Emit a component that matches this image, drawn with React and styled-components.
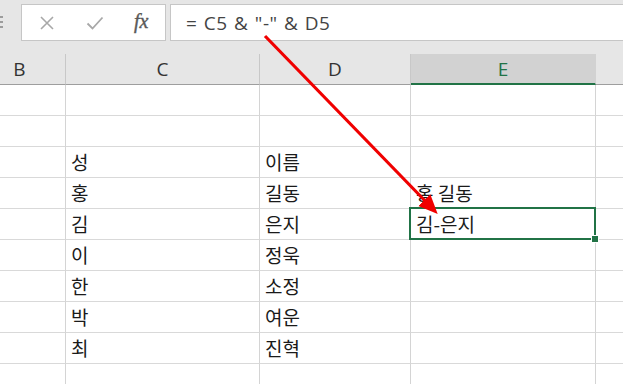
import React from 'react';
import styled, { createGlobalStyle } from 'styled-components';

const GlobalStyle = createGlobalStyle`
  html, body {
    margin: 0;
    padding: 0;
    background: #ffffff;
    overflow: hidden;
  }
`

const columns = [
  { key: 'B', width: 92 },
  { key: 'C', width: 194 },
  { key: 'D', width: 151 },
  { key: 'E', width: 185, active: true },
  { key: 'F', width: 60 },
]

const rows = [
  ['', '', '', '', ''],
  ['', '', '', '', ''],
  ['', '성', '이름', '', ''],
  ['', '홍', '길동', '홍 길동', ''],
  ['', '김', '은지', '김-은지', ''],
  ['', '이', '정욱', '', ''],
  ['', '한', '소정', '', ''],
  ['', '박', '여운', '', ''],
  ['', '최', '진혁', '', ''],
  ['', '', '', '', ''],
]

const App = () => {
  return (
    <Page>
      <GlobalStyle />
      <FormulaBar>
        <Grip>
          <span /><span /><span />
        </Grip>
        <ButtonBox>
          <IconButton>
            <svg width="16" height="16" viewBox="0 0 16 16">
              <path d="M2 2 L14 14 M14 2 L2 14" stroke="#a8a8a8" strokeWidth="1.6" fill="none" />
            </svg>
          </IconButton>
          <IconButton>
            <svg width="18" height="16" viewBox="0 0 18 16">
              <path d="M1.5 8.5 L6.5 13.5 L16.5 2.5" stroke="#a8a8a8" strokeWidth="1.8" fill="none" />
            </svg>
          </IconButton>
          <Fx>fx</Fx>
        </ButtonBox>
        <FormulaInput>= C5 &amp; "-" &amp; D5</FormulaInput>
      </FormulaBar>

      <Sheet>
        <HeaderRow>
          {columns.map((c) => (
            <HeaderCell key={c.key} $w={c.width} $active={c.active}>
              {c.key === 'F' ? '' : c.key}
            </HeaderCell>
          ))}
        </HeaderRow>
        {rows.map((r, i) => (
          <Row key={i}>
            {r.map((text, j) => (
              <Cell key={j} $w={columns[j].width}>
                {text}
                {i === 4 && j === 3 && (
                  <Selection>
                    <FillHandle />
                  </Selection>
                )}
              </Cell>
            ))}
          </Row>
        ))}
        <Arrow width="623" height="384" viewBox="0 0 623 384">
          <defs>
            <marker id="head" markerWidth="6" markerHeight="6" refX="3" refY="3" orient="auto" markerUnits="strokeWidth">
              <path d="M0 0.4 L6 3 L0 5.6 Z" fill="#f00000" />
            </marker>
          </defs>
          <line x1="265" y1="36" x2="431" y2="207" stroke="#f00000" strokeWidth="3.2" markerEnd="url(#head)" />
        </Arrow>
      </Sheet>
    </Page>
  )
}

export default App;

const Page = styled.div`
  position: relative;
  width: 623px;
  height: 384px;
  overflow: hidden;
  background: #ffffff;
  font-family: "Noto Sans CJK KR", "Noto Sans", sans-serif;
`
const FormulaBar = styled.div`
  height: 54px;
  background: #e6e6e6;
  display: flex;
  align-items: flex-start;
  padding-top: 4px;
  box-sizing: border-box;
`
const Grip = styled.div`
  width: 21px;
  display: flex;
  flex-direction: column;
  gap: 3px;
  padding-top: 12px;

  span{
    width: 3px;
    height: 2px;
    background: #9c9c9c;
  }
`
const ButtonBox = styled.div`
  width: 145px;
  height: 37px;
  box-sizing: border-box;
  background: #ffffff;
  border: 1px solid #c6c6c6;
  display: flex;
  align-items: center;
  padding-left: 17px;
`
const IconButton = styled.div`
  width: 47px;
  display: flex;
  align-items: center;
  justify-content: flex-start;
`
const Fx = styled.span`
  font-family: "Liberation Serif", serif;
  font-style: italic;
  font-size: 20px;
  color: #5a5a5a;
  margin-left: 1px;
  margin-top: -3px;
  -webkit-text-stroke: 0.4px #5a5a5a;
`
const FormulaInput = styled.div`
  flex: 1;
  height: 37px;
  margin-left: 4px;
  box-sizing: border-box;
  background: #ffffff;
  border: 1px solid #c6c6c6;
  border-right: none;
  display: flex;
  align-items: center;
  padding-left: 15px;
  font-family: "Open Sans", "Noto Sans", sans-serif;
  font-size: 19px;
  letter-spacing: 0.5px;
  word-spacing: 1px;
  color: #444444;
  white-space: pre;
`
const Sheet = styled.div`
  position: relative;
  margin-left: -26px;
`
const HeaderRow = styled.div`
  display: flex;
  height: 31px;
`
const HeaderCell = styled.div`
  flex: 0 0 ${(p) => p.$w}px;
  box-sizing: border-box;
  background: ${(p) => (p.$active ? '#d2d2d2' : '#e6e6e6')};
  border-right: 1px solid ${(p) => (p.$active ? '#d2d2d2' : '#c8c8c8')};
  border-bottom: ${(p) => (p.$active ? '2px solid #217346' : '1px solid #9e9e9e')};
  display: flex;
  align-items: center;
  justify-content: center;
  padding-top: ${(p) => (p.$active ? '1px' : '0')};
  font-family: "Open Sans", "Noto Sans", sans-serif;
  font-size: 19px;
  color: ${(p) => (p.$active ? '#217346' : '#333333')};
`
const Row = styled.div`
  display: flex;
  height: 31px;
`
const Cell = styled.div`
  position: relative;
  flex: 0 0 ${(p) => p.$w}px;
  box-sizing: border-box;
  border-right: 1px solid #d4d4d4;
  border-bottom: 1px solid #d9d9d9;
  display: flex;
  align-items: flex-end;
  padding: 0 0 3px 5px;
  font-size: 19px;
  line-height: 25px;
  color: #1a1a1a;
  white-space: pre;
`
const Selection = styled.div`
  position: absolute;
  z-index: 2;
  left: -2px;
  top: -2px;
  right: -1px;
  bottom: -1px;
  border: 2px solid #217346;
  pointer-events: none;
`
const FillHandle = styled.div`
  position: absolute;
  right: -5px;
  bottom: -5px;
  width: 6px;
  height: 6px;
  background: #217346;
  border: 1px solid #ffffff;
`
const Arrow = styled.svg`
  position: absolute;
  z-index: 3;
  left: 26px;
  top: -54px;
  pointer-events: none;
`
